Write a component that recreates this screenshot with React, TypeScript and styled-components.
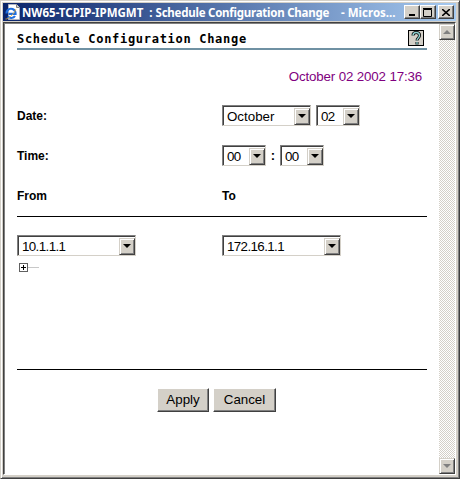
import React from 'react'
import styled, { createGlobalStyle } from 'styled-components'

const GlobalStyle = createGlobalStyle`
  html, body {
    margin: 0;
    padding: 0;
    background: #fff;
    overflow: hidden;
  }
`

const Window = styled.div`
  width: 460px;
  height: 479px;
  box-sizing: border-box;
  display: flex;
  flex-direction: column;
  background: #d4d0c8;
  border-top: 1px solid #d4d0c8;
  border-left: 1px solid #d4d0c8;
  border-right: 1px solid #404040;
  border-bottom: 1px solid #404040;
  box-shadow: inset 1px 1px 0 #fff, inset -1px -1px 0 #808080;
  padding: 2px 3px 3px 2px;
  font-family: 'Liberation Sans', Arial, sans-serif;
`

const TitleBar = styled.div`
  height: 18px;
  flex: none;
  display: flex;
  align-items: center;
  padding: 0 2px;
  background: linear-gradient(90deg, #0a246a 0%, #a6caf0 100%);
`

const TitleIcon = styled.svg`
  flex: none;
  width: 16px;
  height: 16px;
  margin-right: 1px;
`

const TitleText = styled.div`
  flex: 1;
  white-space: pre;
  overflow: hidden;
  color: #fff;
  font-family: 'Noto Sans', sans-serif;
  font-size: 11.5px;
  font-weight: 700;
`

const TitlePageName = styled.span`
  letter-spacing: -0.24px;
`

const CaptionButton = styled.div<{ $gap?: boolean }>`
  flex: none;
  width: 16px;
  height: 14px;
  margin-left: ${({ $gap }) => ($gap ? '2px' : '0')};
  box-sizing: border-box;
  background: #d4d0c8;
  border-top: 1px solid #fff;
  border-left: 1px solid #fff;
  border-right: 1px solid #404040;
  border-bottom: 1px solid #404040;
  box-shadow: inset -1px -1px 0 #808080;
  display: flex;
  align-items: center;
  justify-content: center;
`

const Client = styled.div`
  flex: 1;
  min-height: 0;
  display: flex;
  margin-top: 1px;
  padding: 1px 0 0 1px;
  border-top: 1px solid #404040;
  border-left: 1px solid #404040;
  border-right: 1px solid #fff;
  border-bottom: 1px solid #fff;
  box-shadow: inset 1px 1px 0 #808080;
`

const Page = styled.div`
  flex: 1;
  min-width: 0;
  background: #fff;
  padding: 3px 12px 0;
  display: flex;
  flex-direction: column;
`

const Header = styled.div`
  display: flex;
  align-items: flex-end;
  justify-content: space-between;
  height: 21px;
  flex: none;
  border-bottom: 2px solid #6f91a3;
  padding-right: 3px;
`

const Heading = styled.div`
  font-family: 'DejaVu Sans Mono', monospace;
  font-size: 12px;
  font-weight: 700;
  color: #000;
  letter-spacing: 0.7px;
  line-height: 18px;
`

const HelpBox = styled.div`
  width: 16px;
  height: 16px;
  margin-bottom: 2px;
  box-sizing: border-box;
  border: 1px solid #000;
  background: #d4d0c8;
  display: flex;
  align-items: center;
  justify-content: center;
`

const Stamp = styled.div`
  margin-top: 19px;
  height: 15px;
  text-align: right;
  padding-right: 5px;
  font-size: 13.33px;
  line-height: 15px;
  letter-spacing: -0.15px;
  color: #800080;
`

const FormRow = styled.div<{ $top: number }>`
  display: grid;
  grid-template-columns: 205px 1fr;
  align-items: center;
  margin-top: ${({ $top }) => $top}px;
`

const Label = styled.div`
  font-size: 12px;
  line-height: 14px;
  font-weight: 700;
  color: #000;
  font-family: 'Liberation Sans', Arial, sans-serif;
`

const Controls = styled.div`
  display: flex;
  align-items: center;
`

const Select = styled.div<{ $width: number; $gap?: number; $numeric?: boolean }>`
  width: ${({ $width }) => $width}px;
  height: 21px;
  margin-right: ${({ $gap }) => $gap ?? 0}px;
  box-sizing: border-box;
  display: flex;
  align-items: center;
  justify-content: space-between;
  background: #fff;
  border-top: 1px solid #808080;
  border-left: 1px solid #808080;
  border-right: 1px solid #d4d0c8;
  border-bottom: 1px solid #d4d0c8;
  box-shadow: inset 1px 1px 0 #404040;
  padding: 2px 0 0 4px;
  font-size: 13.33px;
  letter-spacing: ${({ $numeric }) => ($numeric ? '-0.6px' : '0')};
  color: #000;
`

const Arrow = styled.div`
  flex: none;
  width: 16px;
  height: 17px;
  margin-bottom: 1px;
  box-sizing: border-box;
  background: #d4d0c8;
  border-top: 1px solid #d4d0c8;
  border-left: 1px solid #d4d0c8;
  border-right: 1px solid #404040;
  border-bottom: 1px solid #404040;
  box-shadow: inset 1px 1px 0 #fff, inset -1px -1px 0 #808080;
  display: flex;
  align-items: center;
  justify-content: center;
  &::after {
    content: '';
    border-left: 4px solid transparent;
    border-right: 4px solid transparent;
    border-top: 4px solid #000;
  }
`

const Colon = styled.span`
  width: 14px;
  text-align: center;
  font-size: 13px;
  font-weight: 700;
`

const Rule = styled.div<{ $top: number }>`
  height: 1px;
  flex: none;
  background: #000;
  margin-top: ${({ $top }) => $top}px;
`

const TreeHandle = styled.div`
  display: flex;
  align-items: center;
  margin: 7px 0 0 2px;
  height: 8px;
`

const Expander = styled.div`
  width: 9px;
  height: 9px;
  flex: none;
  box-sizing: border-box;
  border: 1px solid #606060;
  position: relative;
  &::before {
    content: '';
    position: absolute;
    left: 1px;
    top: 3px;
    width: 5px;
    height: 1px;
    background: #000;
  }
  &::after {
    content: '';
    position: absolute;
    left: 3px;
    top: 1px;
    width: 1px;
    height: 5px;
    background: #000;
  }
`

const TreeLine = styled.div`
  width: 11px;
  height: 1px;
  background: #c8c8c8;
`

const Actions = styled.div`
  display: flex;
  justify-content: center;
  gap: 4px;
  margin-top: 18px;
  padding-right: 11px;
`

const Button = styled.div<{ $width: number }>`
  width: ${({ $width }) => $width}px;
  height: 24px;
  box-sizing: border-box;
  padding-bottom: 2px;
  background: #d4d0c8;
  border-top: 1px solid #fff;
  border-left: 1px solid #fff;
  border-right: 1px solid #404040;
  border-bottom: 1px solid #404040;
  box-shadow: inset -1px -1px 0 #808080;
  display: flex;
  align-items: center;
  justify-content: center;
  font-size: 13.33px;
  color: #000;
`

const Scrollbar = styled.div`
  flex: none;
  width: 16px;
  display: flex;
  flex-direction: column;
  justify-content: space-between;
  background-color: #f4f3f0;
  background-image: conic-gradient(#d4d0c8 25%, #fff 0 50%, #d4d0c8 0 75%, #fff 0);
  background-size: 2px 2px;
`

const ScrollButton = styled.div<{ $down?: boolean }>`
  height: 16px;
  box-sizing: border-box;
  background: #d4d0c8;
  border-top: 1px solid #d4d0c8;
  border-left: 1px solid #d4d0c8;
  border-right: 1px solid #404040;
  border-bottom: 1px solid #404040;
  box-shadow: inset 1px 1px 0 #fff, inset -1px -1px 0 #808080;
  display: flex;
  align-items: center;
  justify-content: center;
  &::after {
    content: '';
    border-left: 4px solid transparent;
    border-right: 4px solid transparent;
    ${({ $down }) => ($down ? 'border-top: 4px solid #808080;' : 'border-bottom: 4px solid #808080;')}
  }
`

const IeIcon = () => (
  <TitleIcon viewBox="0 0 16 16">
    <path d="M3.500 0.500h8l3 3v12h-11z" fill="#fff" stroke="#b0b4c0" />
    <path d="M11.500 0.500v3h3" fill="#d4d0c8" stroke="#808080" />
    <path d="M1.500 9.500a4.500 4.500 0 0 1 9-0.500v0.800h-7M10 12a4.500 4 0 0 1-7.300 0.600" fill="none" stroke="#1f6fe0" strokeWidth="2.200" />
    <path d="M0.500 15c2 0.500 8-4 10.500-10" fill="none" stroke="#f0b030" strokeWidth="0.800" />
  </TitleIcon>
)

const HelpIcon = () => (
  <svg width="10" height="14" viewBox="0 0 10 14">
    <path d="M2 4.500c0-4 6.500-4 6.500 0 0 2.500-2.500 2.500-2.500 5M6 11v2.500" fill="none" stroke="#000" strokeWidth="3" />
    <path d="M2 4.500c0-4 6.500-4 6.500 0 0 2.500-2.500 2.500-2.500 5M6 11v2.500" fill="none" stroke="#8fd0d0" strokeWidth="1.400" />
  </svg>
)

const App = () => (
  <>
    <GlobalStyle />
    <Window>
      <TitleBar>
        <IeIcon />
        <TitleText>
          {'NW65-TCPIP-IPMGMT  : '}
          <TitlePageName>Schedule Configuration Change</TitlePageName>
          {'    - Micros...'}
        </TitleText>
        <CaptionButton>
          <svg width="8" height="8" viewBox="0 0 8 8"><path d="M1 6h6v2H1z" fill="#000" /></svg>
        </CaptionButton>
        <CaptionButton>
          <svg width="10" height="9" viewBox="0 0 10 9"><path d="M0.500 1.500h8v7h-8z" fill="none" stroke="#000" /><path d="M0 0.500h9" stroke="#000" /></svg>
        </CaptionButton>
        <CaptionButton $gap>
          <svg width="8" height="7" viewBox="0 0 8 7"><path d="M0 0l8 7M8 0L0 7" stroke="#000" strokeWidth="1.600" /></svg>
        </CaptionButton>
      </TitleBar>
      <Client>
        <Page>
          <Header>
            <Heading>Schedule Configuration Change</Heading>
            <HelpBox><HelpIcon /></HelpBox>
          </Header>
          <Stamp>October 02 2002 17:36</Stamp>
          <FormRow $top={21}>
            <Label>Date:</Label>
            <Controls>
              <Select $width={89} $gap={5}>October<Arrow /></Select>
              <Select $width={44} $numeric>02<Arrow /></Select>
            </Controls>
          </FormRow>
          <FormRow $top={19}>
            <Label>Time:</Label>
            <Controls>
              <Select $width={44} $numeric>00<Arrow /></Select>
              <Colon>:</Colon>
              <Select $width={44} $numeric>00<Arrow /></Select>
            </Controls>
          </FormRow>
          <FormRow $top={23}>
            <Label>From</Label>
            <Label>To</Label>
          </FormRow>
          <Rule $top={13} />
          <FormRow $top={18}>
            <Select $width={119} $numeric>10.1.1.1<Arrow /></Select>
            <Select $width={119} $numeric>172.16.1.1<Arrow /></Select>
          </FormRow>
          <TreeHandle>
            <Expander />
            <TreeLine />
          </TreeHandle>
          <Rule $top={98} />
          <Actions>
            <Button $width={52}>Apply</Button>
            <Button $width={63}>Cancel</Button>
          </Actions>
        </Page>
        <Scrollbar>
          <ScrollButton />
          <ScrollButton $down />
        </Scrollbar>
      </Client>
    </Window>
  </>
)

export default App
